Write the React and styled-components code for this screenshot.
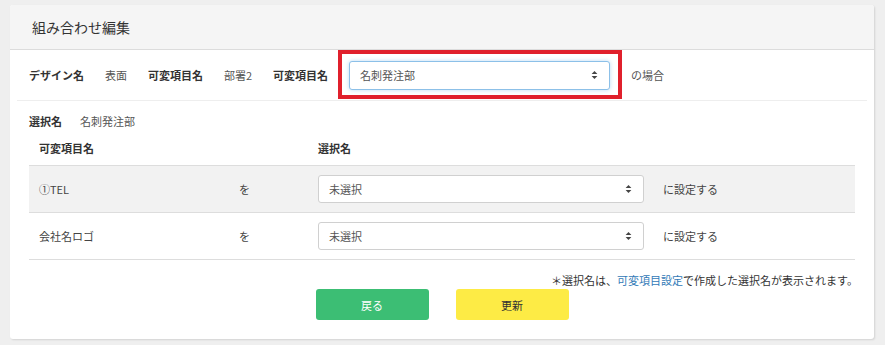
import React from 'react';
import styled, {createGlobalStyle} from 'styled-components';

const GlobalStyle = createGlobalStyle`
    body {
        margin: 0;
        background-color: #efefef;
        font-family: "Noto Sans CJK JP", "Noto Sans", sans-serif;
        color: #333;
    }
`

const rows = [
    {name: '①TEL', value: '未選択'},
    {name: '会社名ロゴ', value: '未選択'},
]

const Arrows = () => (
    <svg width="7" height="10" viewBox="0 0 7 10">
        <path d="M0.6 4.1 L3.5 1 L6.4 4.1 Z" fill="#444" />
        <path d="M0.6 5.9 L3.5 9 L6.4 5.9 Z" fill="#444" />
    </svg>
)

const App = () => {
  return (
    <Page>
        <GlobalStyle />
        <Card>
            <CardHeader>組み合わせ編集</CardHeader>
            <CardBody>
                <ConditionRow>
                    <Label>デザイン名</Label>
                    <Value>表面</Value>
                    <Label>可変項目名</Label>
                    <Value>部署2</Value>
                    <Label>可変項目名</Label>
                    <Highlight>
                        <SelectBox width="261px" height="29px" focused>
                            <span>名刺発注部</span>
                            <Arrows />
                        </SelectBox>
                    </Highlight>
                    <Value>の場合</Value>
                </ConditionRow>

                <SelectionLine>
                    <Label>選択名</Label>
                    <Value>名刺発注部</Value>
                </SelectionLine>

                <Table>
                    <HeadRow>
                        <Cell><Label>可変項目名</Label></Cell>
                        <Cell />
                        <Cell><Label>選択名</Label></Cell>
                        <Cell />
                    </HeadRow>
                    {rows.map((r, i) => (
                        <BodyRow key={r.name} striped={i % 2 === 0}>
                            <Cell>{r.name}</Cell>
                            <Cell>を</Cell>
                            <Cell>
                                <SelectBox width="326px" height="28px">
                                    <span>{r.value}</span>
                                    <Arrows />
                                </SelectBox>
                            </Cell>
                            <Cell>に設定する</Cell>
                        </BodyRow>
                    ))}
                </Table>

                <Note>＊選択名は、<a href="#">可変項目設定</a>で作成した選択名が表示されます。</Note>

                <Buttons>
                    <Button color="#3cbe74" text="#fff">戻る</Button>
                    <Button color="#fdeb45" text="#333">更新</Button>
                </Buttons>
            </CardBody>
        </Card>
    </Page>
  )
}

export default App;

const Page = styled.div`
    padding: 5px 11px 8px 10px;
`
const Card = styled.div`
    width: 864px;
    background-color: #fff;
    border-radius: 3px;
    box-shadow: 1px 1px 2px rgba(0, 0, 0, 0.12);
    padding-bottom: 19px;
`
const CardHeader = styled.div`
    display: flex;
    align-items: center;
    height: 44px;
    padding-left: 22px;
    background-color: #f5f5f5;
    border-bottom: 1px solid #dcdcdc;
    border-radius: 3px 3px 0 0;
    font-size: 14px;
    color: #333;
`
const CardBody = styled.div`
    padding: 0 7px 0 7px;
    font-size: 11px;
`
const ConditionRow = styled.div`
    display: flex;
    align-items: center;
    gap: 21px;
    height: 50px;
    padding-left: 12px;
    border-bottom: 1px solid #eee;
`
const Label = styled.span`
    font-weight: bold;
    color: #333;
`
const Value = styled.span`
    color: #555;
`
const Highlight = styled.div`
    position: relative;

    &::after {
        content: '';
        position: absolute;
        top: -11px;
        right: -12px;
        bottom: -9px;
        left: -11px;
        border: 4px solid #e0202c;
        pointer-events: none;
    }
`
const SelectBox = styled.div`
    display: flex;
    align-items: center;
    justify-content: space-between;
    box-sizing: border-box;
    width: ${props => props.width};
    height: ${props => props.height};
    padding: 0 11px 0 10px;
    background-color: #fff;
    border: 1px solid ${props => props.focused ? '#8cc0e8' : '#d0d0d0'};
    border-radius: 3px;
    box-shadow: ${props => props.focused ? '0 0 4px rgba(102, 175, 233, 0.45)' : 'none'};
    color: #555;
    font-size: 11px;
`
const SelectionLine = styled.div`
    display: flex;
    align-items: center;
    gap: 18px;
    height: 20px;
    margin-top: 10px;
    padding-left: 12px;
`
const Table = styled.div`
    margin: 0 12px 0 12px;
`
const HeadRow = styled.div`
    display: grid;
    grid-template-columns: 200px 80px 344px 1fr;
    align-items: center;
    height: 34px;
    border-bottom: 1px solid #ddd;
`
const BodyRow = styled.div`
    display: grid;
    grid-template-columns: 200px 80px 344px 1fr;
    align-items: center;
    height: 46px;
    background-color: ${props => props.striped ? '#f2f2f2' : '#fff'};
    border-bottom: 1px solid #ddd;
    color: #444;
`
const Cell = styled.div`
    padding-left: 10px;

    &:nth-child(3) {
        padding-left: 9px;
    }
`
const Note = styled.div`
    margin-top: 12px;
    padding-right: 9px;
    line-height: 16px;
    text-align: right;
    color: #333;

    > a {
        color: #337ab7;
        text-decoration: none;
    }
`
const Buttons = styled.div`
    display: flex;
    justify-content: center;
    gap: 27px;
    margin-top: 1px;
`
const Button = styled.button`
    width: 113px;
    height: 31px;
    border: none;
    border-radius: 3px;
    background-color: ${props => props.color};
    color: ${props => props.text};
    font-family: inherit;
    font-size: 11px;
    cursor: pointer;
`
